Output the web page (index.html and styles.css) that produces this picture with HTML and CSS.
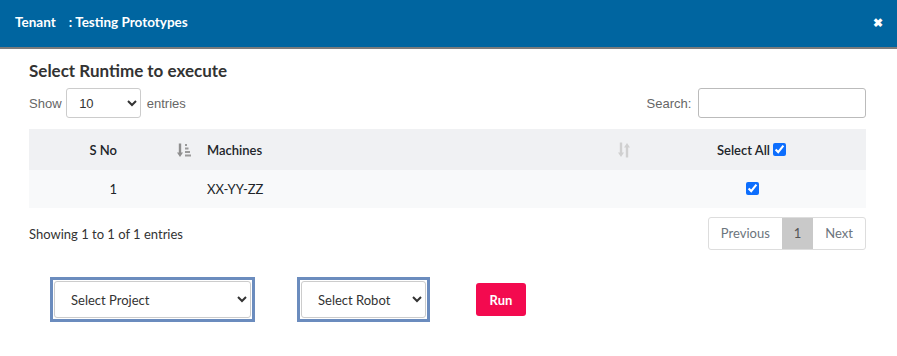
FILE: index.html
```html
<!DOCTYPE html>
<html lang="en">
<head>
    <meta charset="UTF-8">
    <meta name="viewport" content="width=device-width, initial-scale=1.0">
    <title>Select Runtime</title>
    <link rel="stylesheet" href="styles.css">
</head>
<body>
    <div class="modal">
        <div class="modal-header">
            <span class="modal-title">Tenant &nbsp;&nbsp; : Testing Prototypes</span>
            <span class="close">&#10006;</span>
        </div>

        <div class="modal-body">
            <h2>Select Runtime to execute</h2>

            <div class="dt-top">
                <label class="dt-length">Show
                    <select class="length-select">
                        <option>10</option>
                        <option>25</option>
                        <option>50</option>
                    </select>
                    entries
                </label>
                <label class="dt-search">Search: <input type="search" class="search-input"></label>
            </div>

            <table class="runtime-table">
                <colgroup>
                    <col class="w-sno">
                    <col class="w-sort">
                    <col class="w-machine">
                    <col class="w-sort2">
                    <col class="w-select">
                </colgroup>
                <thead>
                    <tr>
                        <th class="col-sno">S No</th>
                        <th class="col-sort">
                            <svg width="14" height="15" viewBox="0 0 14 15">
                                <path d="M3 0.5v11" stroke="#8f8f8f" stroke-width="2.4" fill="none"/>
                                <path d="M0 9.5h6L3 14z" fill="#8f8f8f"/>
                                <rect x="8" y="1" width="2" height="2" fill="#9a9a9a"/>
                                <rect x="8" y="4.5" width="3.5" height="2" fill="#9a9a9a"/>
                                <rect x="8" y="8" width="5" height="2" fill="#9a9a9a"/>
                                <rect x="8" y="11.5" width="6" height="2" fill="#9a9a9a"/>
                            </svg>
                        </th>
                        <th class="col-machine">Machines</th>
                        <th class="col-sort2">
                            <svg width="14" height="16" viewBox="0 0 14 16">
                                <path d="M4 0.5v12" stroke="#d0d0d0" stroke-width="2.4" fill="none"/>
                                <path d="M1 10.5h6L4 15z" fill="#d0d0d0"/>
                                <path d="M10 15.5v-12" stroke="#d0d0d0" stroke-width="2.4" fill="none"/>
                                <path d="M7 5.5h6L10 1z" fill="#d0d0d0"/>
                            </svg>
                        </th>
                        <th class="col-select">Select All <input type="checkbox" class="chk" checked></th>
                    </tr>
                </thead>
                <tbody>
                    <tr>
                        <td class="col-sno">1</td>
                        <td></td>
                        <td class="col-machine">XX-YY-ZZ</td>
                        <td></td>
                        <td class="col-select"><input type="checkbox" class="chk" checked></td>
                    </tr>
                </tbody>
            </table>

            <div class="dt-bottom">
                <div class="dt-info">Showing 1 to 1 of 1 entries</div>
                <div class="pager">
                    <span class="page-btn">Previous</span>
                    <span class="page-btn current">1</span>
                    <span class="page-btn">Next</span>
                </div>
            </div>

            <div class="run-row">
                <div class="select-frame project">
                    <select class="form-select">
                        <option>Select Project</option>
                    </select>
                </div>
                <div class="select-frame robot">
                    <select class="form-select">
                        <option>Select Robot</option>
                    </select>
                </div>
                <button class="btn-run">Run</button>
            </div>
        </div>
    </div>
</body>
</html>
```

FILE: styles.css
```css
body {
    margin: 0;
    background: #fff;
    font-family: Lato, "Noto Sans", sans-serif;
    color: #212529;
}
.modal {
    width: 897px;
    height: 356px;
    background: #fff;
}
.modal-header {
    height: 47px;
    background: #0065a0;
    border-bottom: 2px solid #7b7b7b;
    display: flex;
    align-items: center;
    justify-content: space-between;
    padding: 0 14px 0 15px;
    color: #fff;
}
.modal-title {
    font-size: 13.5px;
    font-weight: 700;
    margin-top: -3px;
}
.close {
    font-size: 12px;
    font-weight: 700;
    margin-top: -3px;
}
.modal-body {
    padding: 0 31px 0 29px;
}
h2 {
    margin: 11px 0 7px;
    font-size: 17px;
    font-weight: 700;
    color: #333;
}
.dt-top {
    display: flex;
    justify-content: space-between;
    align-items: center;
    font-family: "Liberation Sans", Arial, sans-serif;
    font-size: 13px;
    color: #666;
}
.length-select {
    width: 75px;
    height: 30px;
    margin: 0 2px 0 1px;
    padding: 0 8px;
    border: 1px solid #ccc;
    border-radius: 3px;
    background: #fff;
    font-family: "Liberation Sans", Arial, sans-serif;
    font-size: 13px;
    color: #333;
}
.search-input {
    width: 168px;
    height: 30px;
    margin-left: 3px;
    padding: 0;
    border: 1px solid #bbb;
    border-radius: 3px;
    box-sizing: border-box;
}
.runtime-table {
    width: 837px;
    margin-top: 11px;
    border-collapse: collapse;
    table-layout: fixed;
    font-size: 13px;
}
.w-sno { width: 88px; }
.w-sort { width: 77px; }
.w-machine { width: 416px; }
.w-sort2 { width: 30px; }
.w-select { width: 226px; }
.runtime-table th {
    background: #f0f1f3;
    height: 41px;
    font-weight: 600;
    padding: 0;
}
.runtime-table td {
    background: #f8f9fa;
    height: 38px;
    padding: 0;
}
.col-sno {
    text-align: right;
}
.col-sort {
    text-align: right;
    padding-right: 3px !important;
}
.col-sort svg,
.col-sort2 svg {
    display: inline-block;
    vertical-align: middle;
}
.col-machine {
    text-align: left;
    padding-left: 13px !important;
}
.col-sort2 {
    text-align: left;
    padding-left: 7px !important;
}
.col-select {
    text-align: left;
    padding-left: 77px !important;
}
.runtime-table td.col-select {
    padding-left: 106px !important;
}
.chk {
    width: 13px;
    height: 13px;
    margin: 0;
    vertical-align: -1px;
    accent-color: #0d6efd;
}
.dt-bottom {
    display: flex;
    justify-content: space-between;
    align-items: center;
    margin-top: 9px;
}
.dt-info {
    font-size: 13px;
    color: #333;
}
.pager {
    display: flex;
    border: 1px solid #ddd;
    border-radius: 3px;
    font-size: 13px;
    color: #6c757d;
}
.page-btn {
    padding: 0 12px;
    line-height: 31px;
}
.page-btn.current {
    background: #c9c9c9;
    color: #555;
}
.run-row {
    display: flex;
    align-items: center;
    margin-top: 27px;
    padding-left: 21px;
}
.select-frame {
    border: 3px solid #6b8cbe;
    padding: 1px;
    height: 37px;
}
.select-frame.project {
    width: 197px;
}
.select-frame.robot {
    width: 125px;
    margin-left: 42px;
}
.form-select {
    width: 100%;
    height: 37px;
    border: 1px solid #ccc;
    border-radius: 3px;
    background: #fff;
    padding: 0 4px 0 12px;
    font-family: Lato, "Noto Sans", sans-serif;
    font-size: 13px;
    color: #333;
}
.robot .form-select {
    padding-left: 12px;
}
.btn-run {
    margin-left: 46px;
    width: 50px;
    height: 33px;
    border: none;
    border-radius: 3px;
    background: #f30a4f;
    color: #fff;
    font-family: Lato, "Noto Sans", sans-serif;
    font-weight: 700;
    font-size: 13px;
}
```
